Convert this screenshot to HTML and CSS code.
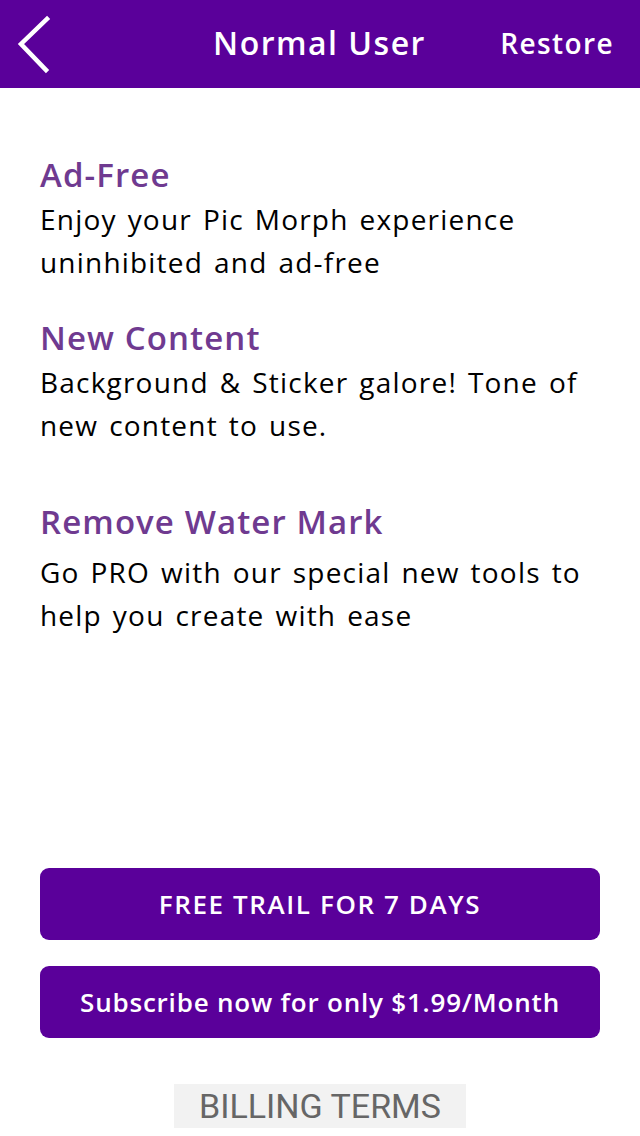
FILE: index.html
```html
<!DOCTYPE html>
<html lang="en">
<head>
<meta charset="utf-8">
<title>Normal User</title>
<link rel="stylesheet" href="styles.css">
</head>
<body>
<div class="screen">
  <header class="nav">
    <button class="nav-back" aria-label="Back">
      <svg width="40" height="60" viewBox="0 0 40 60"><polyline points="32,5 6,30 31,56" fill="none" stroke="#fff" stroke-width="4.5" stroke-linecap="square"/></svg>
    </button>
    <h1 class="nav-title">Normal User</h1>
    <button class="nav-action">Restore</button>
  </header>
  <main class="content">
    <section class="feature">
      <h2 class="feature-title">Ad-Free</h2>
      <p class="feature-text">Enjoy your Pic Morph experience uninhibited and ad-free</p>
    </section>
    <section class="feature feature-second">
      <h2 class="feature-title">New Content</h2>
      <p class="feature-text">Background &amp; Sticker galore! Tone of new content to use.</p>
    </section>
    <section class="feature feature-third">
      <h2 class="feature-title">Remove Water Mark</h2>
      <p class="feature-text feature-text-spaced">Go PRO with our special new tools to help you create with ease</p>
    </section>
  </main>
  <div class="actions">
    <button class="btn btn-caps">FREE TRAIL FOR 7 DAYS</button>
    <button class="btn">Subscribe now for only $1.99/Month</button>
    <button class="billing">BILLING TERMS</button>
  </div>
</div>
</body>
</html>
```
FILE: styles.css
```css
* { box-sizing: border-box; }
html, body { margin: 0; padding: 0; background: #fff; }
body { font-family: "Open Sans", "Noto Sans", sans-serif; }
.screen { width: 640px; height: 1136px; display: flex; flex-direction: column; overflow: hidden; }
button { font-family: inherit; border: 0; background: none; padding: 0; cursor: pointer; }

.nav { height: 88px; background: #5a009a; display: grid; grid-template-columns: 1fr auto 1fr; align-items: center; padding: 0 26px 0 15px; color: #fff; flex-shrink: 0; }
.nav-back { width: 40px; height: 60px; display: flex; align-items: center; justify-self: start; }
.nav-back svg { display: block; }
.nav-title { margin: -2px 0 0 0; text-align: center; font-size: 32px; line-height: 40px; font-weight: 600; letter-spacing: 1.5px; transform: translateX(5px); }
.nav-action { justify-self: end; color: #fff; font-size: 28px; line-height: 40px; font-weight: 600; letter-spacing: 1.4px; margin-top: -2px; }

.content { padding: 67px 40px 0 40px; flex: 1; }
.feature-title { margin: 0; font-size: 33px; line-height: 40px; font-weight: 600; color: #6f3a90; letter-spacing: 1.1px; }
.feature-text { margin: 3px 0 0 0; font-size: 28px; line-height: 43px; color: #000; font-weight: 400; letter-spacing: 1.2px; word-spacing: 2.5px; }
.feature-second { margin-top: 34px; }
.feature-third { margin-top: 55px; }
.feature-text-spaced { margin-top: 9px; }

.actions { padding: 0 40px 8px 40px; display: flex; flex-direction: column; align-items: center; }
.btn { width: 560px; height: 72px; background: #5a009a; color: #fff; border-radius: 9px; font-size: 26px; font-weight: 600; letter-spacing: 0.8px; display: flex; align-items: center; justify-content: center; }
.btn-caps { letter-spacing: 1.6px; }
.btn + .btn { margin-top: 26px; }
.billing { margin-top: 46px; width: 292px; height: 44px; background: #f2f2f2; color: #666; font-family: Roboto, "Liberation Sans", sans-serif; font-size: 34px; font-weight: 400; display: flex; align-items: center; justify-content: center; }
```
